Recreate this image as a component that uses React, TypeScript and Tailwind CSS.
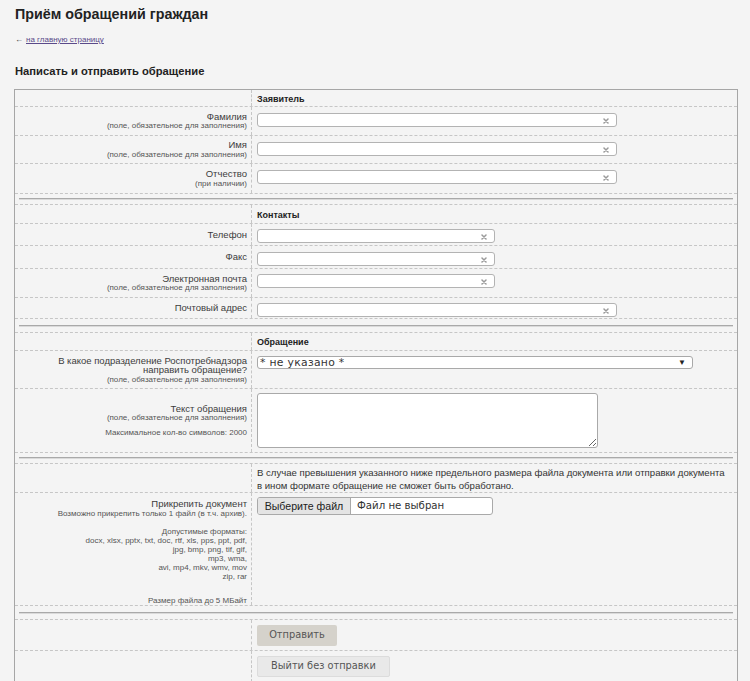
import React from "react";

const ROW = "flex border-b border-dashed border-[#c6c6c6]";
const LEFT =
  "w-[237px] shrink-0 border-r border-dashed border-[#c6c6c6] flex flex-col justify-center items-end text-right pr-[4px]";
const MAIN = "text-[9.5px] leading-[9.5px] text-[#3c3c3c]";
const SUB = "text-[8px] leading-[9px] text-[#555]";

function ClearIcon() {
  return (
    <svg width="6" height="6" viewBox="0 0 6 6" className="absolute right-[7px] top-[3.5px]">
      <path d="M1 1 L5 5 M5 1 L1 5" stroke="#9a9a9a" strokeWidth="1.5" strokeLinecap="round" />
    </svg>
  );
}

function TextField({ wide }: { wide: boolean }) {
  return (
    <div
      className={
        wide
          ? "relative h-[14px] w-[360px] rounded-[3px] border border-[#b3b3b3] bg-white"
          : "relative h-[14px] w-[238px] rounded-[3px] border border-[#b3b3b3] bg-white"
      }
    >
      <ClearIcon />
    </div>
  );
}

function Hr({ h }: { h: string }) {
  return (
    <div className={`${ROW} ${h} items-center px-[4px]`}>
      <div className="h-[2px] w-full border-t border-[#a9a9a9] border-b border-b-[#dadada]" />
    </div>
  );
}

export default function App() {
  return (
    <div className="min-h-screen bg-[#f4f4f4] font-['Liberation_Sans',Arial,sans-serif] text-[#333]">
      <div className="pl-[15px] pt-[6px]">
        <h1 className="text-[14.3px] font-bold leading-[17px] text-[#222]">Приём обращений граждан</h1>
        <div className="mt-[12px] flex items-center gap-[3px] text-[8px] leading-[10px]">
          <span className="text-[#333]">←</span>
          <a className="text-[#5a4a8a] underline">на главную страницу</a>
        </div>
        <h2 className="mt-[19px] text-[11.2px] font-bold leading-[14px] text-[#222]">
          Написать и отправить обращение
        </h2>
      </div>

      <div className="ml-[14px] mt-[11px] w-[724px] border-l border-r border-t border-[#a6a6a6]">
        {/* Заявитель */}
        <div className={`${ROW} h-[17px]`}>
          <div className={LEFT} />
          <div className="flex-1 pl-[5px] pt-[4px] text-[9px] font-bold leading-[10px] text-[#222]">Заявитель</div>
        </div>
        <div className={`${ROW} h-[29px]`}>
          <div className={LEFT}>
            <div className={MAIN}>Фамилия</div>
            <div className={SUB}>(поле, обязательное для заполнения)</div>
          </div>
          <div className="flex-1 pl-[5px] pt-[6px]">
            <TextField wide={true} />
          </div>
        </div>
        <div className={`${ROW} h-[28px]`}>
          <div className={LEFT}>
            <div className={MAIN}>Имя</div>
            <div className={SUB}>(поле, обязательное для заполнения)</div>
          </div>
          <div className="flex-1 pl-[5px] pt-[6px]">
            <TextField wide={true} />
          </div>
        </div>
        <div className={`${ROW} h-[30px]`}>
          <div className={LEFT}>
            <div className={MAIN}>Отчество</div>
            <div className={SUB}>(при наличии)</div>
          </div>
          <div className="flex-1 pl-[5px] pt-[6px]">
            <TextField wide={true} />
          </div>
        </div>
        <Hr h="h-[11px]" />

        {/* Контакты */}
        <div className={`${ROW} h-[19px]`}>
          <div className={LEFT} />
          <div className="flex-1 pl-[5px] pt-[5px] text-[9px] font-bold leading-[10px] text-[#222]">Контакты</div>
        </div>
        <div className={`${ROW} h-[22px]`}>
          <div className={LEFT}>
            <div className={MAIN}>Телефон</div>
          </div>
          <div className="flex-1 pl-[5px] pt-[5px]">
            <TextField wide={false} />
          </div>
        </div>
        <div className={`${ROW} h-[23px]`}>
          <div className={LEFT}>
            <div className={MAIN}>Факс</div>
          </div>
          <div className="flex-1 pl-[5px] pt-[6px]">
            <TextField wide={false} />
          </div>
        </div>
        <div className={`${ROW} h-[29px]`}>
          <div className={LEFT}>
            <div className={MAIN}>Электронная почта</div>
            <div className={SUB}>(поле, обязательное для заполнения)</div>
          </div>
          <div className="flex-1 pl-[5px] pt-[5px]">
            <TextField wide={false} />
          </div>
        </div>
        <div className={`${ROW} h-[21px]`}>
          <div className={LEFT}>
            <div className={MAIN}>Почтовый адрес</div>
          </div>
          <div className="flex-1 pl-[5px] pt-[5px]">
            <TextField wide={true} />
          </div>
        </div>
        <Hr h="h-[14px]" />

        {/* Обращение */}
        <div className={`${ROW} h-[18px]`}>
          <div className={LEFT} />
          <div className="flex-1 pl-[5px] pt-[4px] text-[9px] font-bold leading-[10px] text-[#222]">Обращение</div>
        </div>
        <div className={`${ROW} h-[38px]`}>
          <div className={LEFT}>
            <div className={MAIN}>В какое подразделение Роспотребнадзора</div>
            <div className={MAIN}>направить обращение?</div>
            <div className={SUB}>(поле, обязательное для заполнения)</div>
          </div>
          <div className="flex-1 pl-[5px] pt-[5px]">
            <div className="flex h-[13px] w-[436px] items-center justify-between rounded-[3px] border border-[#a9a9a9] bg-white pl-[2px] pr-[6px]">
              <span className="font-['DejaVu_Sans',Verdana,sans-serif] text-[10.8px] leading-[11px] tracking-[0.3px] text-[#333]">
                * не указано *
              </span>
              <span className="text-[8px] leading-[8px] text-[#222]">▼</span>
            </div>
          </div>
        </div>
        <div className={`${ROW} h-[64px]`}>
          <div className={LEFT}>
            <div className={MAIN}>Текст обращения</div>
            <div className={SUB}>(поле, обязательное для заполнения)</div>
            <div className={`${SUB} mt-[6px]`}>Максимальное кол-во символов: 2000</div>
          </div>
          <div className="flex-1 pl-[5px] pt-[4px]">
            <textarea className="block h-[55px] w-[341px] resize rounded-[3px] border border-[#a9a9a9] bg-white outline-none" />
          </div>
        </div>
        <Hr h="h-[11px]" />

        {/* Файл */}
        <div className={`${ROW} h-[29px]`}>
          <div className={LEFT} />
          <div className="flex-1 pl-[5px] pt-[2px] text-[9.6px] leading-[13px] text-[#333]">
            В случае превышения указанного ниже предельного размера файла документа или отправки документа
            <br />в ином формате обращение не сможет быть обработано.
          </div>
        </div>
        <div className={`${ROW} h-[113px]`}>
          <div className={`${LEFT} !justify-start pt-[6px]`}>
            <div className={MAIN}>Прикрепить документ</div>
            <div className={SUB}>Возможно прикрепить только 1 файл (в т.ч. архив).</div>
            <div className={`${SUB} mt-[9px]`}>Допустимые форматы:</div>
            <div className={SUB}>docx, xlsx, pptx, txt, doc, rtf, xls, pps, ppt, pdf,</div>
            <div className={SUB}>jpg, bmp, png, tif, gif,</div>
            <div className={SUB}>mp3, wma,</div>
            <div className={SUB}>avi, mp4, mkv, wmv, mov</div>
            <div className={SUB}>zip, rar</div>
            <div className={`${SUB} mt-[15px]`}>Размер файла до 5 МБайт</div>
          </div>
          <div className="flex-1 pl-[5px] pt-[4px]">
            <div className="flex h-[18px] w-[236px] items-center overflow-hidden rounded-[3px] border border-[#a9a9a9] bg-white">
              <div className="flex h-full w-[93px] items-center justify-center border-r border-[#a9a9a9] bg-[#e4e4e4] text-[10.6px] leading-[12px] text-[#222]">
                Выберите файл
              </div>
              <div className="pl-[6px] font-['DejaVu_Sans',Verdana,sans-serif] text-[10.2px] leading-[12px] text-[#333]">
                Файл не выбран
              </div>
            </div>
          </div>
        </div>
        <Hr h="h-[14px]" />

        <div className={`${ROW} h-[31px]`}>
          <div className={LEFT} />
          <div className="flex-1 pl-[5px] pt-[5px]">
            <div className="flex h-[21px] w-[80px] items-center justify-center rounded-[2px] bg-[#d5d2cb] font-['DejaVu_Sans',Verdana,sans-serif] text-[9.8px] text-[#555]">
              Отправить
            </div>
          </div>
        </div>
        <div className="flex h-[31px]">
          <div className={LEFT} />
          <div className="flex-1 pl-[5px] pt-[5px]">
            <div className="flex h-[21px] w-[133px] items-center justify-center rounded-[2px] border border-[#dcdcdc] bg-[#e9e9e9] font-['DejaVu_Sans',Verdana,sans-serif] text-[9.8px] text-[#555]">
              Выйти без отправки
            </div>
          </div>
        </div>
      </div>
    </div>
  );
}
